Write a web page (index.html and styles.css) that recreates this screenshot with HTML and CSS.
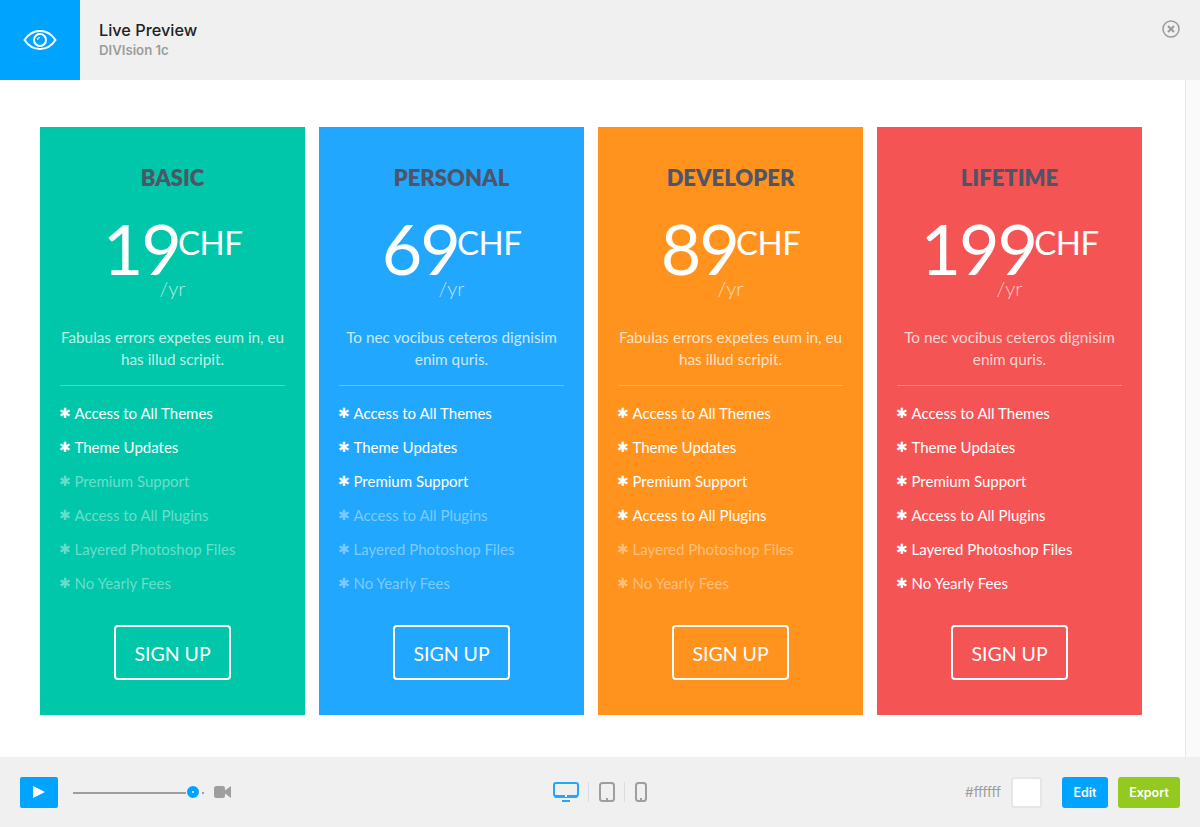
FILE: index.html
```html
<!DOCTYPE html>
<html lang="en">
<head>
<meta charset="utf-8">
<title>Live Preview</title>
<link rel="stylesheet" href="styles.css">
</head>
<body>
<header class="topbar">
  <div class="eye-tile">
    <svg class="eye-icon" width="34" height="22" viewBox="0 0 34 22" fill="none" stroke="#fff">
      <path d="M1.500 11C5.500 5 11 2 17 2s11.500 3 15.500 9C28.500 17 23 20 17 20S5.500 17 1.500 11Z" stroke-width="2"/>
      <circle cx="17" cy="11" r="6" stroke-width="2"/>
      <path d="M14.500 11a2.500 2.500 0 0 1 2.500-2.500" stroke-width="1.200"/>
    </svg>
  </div>
  <div class="titles">
    <div class="title">Live Preview</div>
    <div class="subtitle">DIVIsion 1c</div>
  </div>
  <svg class="close-icon" width="18" height="18" viewBox="0 0 18 18" fill="none" stroke="#9a9a9a">
    <circle cx="9" cy="9" r="8" stroke-width="1.500"/>
    <path d="M6 6l6 6M12 6l-6 6" stroke-width="2"/>
  </svg>
</header>

<div class="workspace">
  <main class="stage">
    <section class="card card-green">
      <h2 class="plan">BASIC</h2>
      <div class="price"><span class="amount">19</span><span class="currency">CHF</span></div>
      <div class="period">/yr</div>
      <p class="blurb">Fabulas errors expetes eum in, eu has illud scripit.</p>
      <ul class="features">
        <li><span class="star">✱</span>Access to All Themes</li>
        <li><span class="star">✱</span>Theme Updates</li>
        <li class="off"><span class="star">✱</span>Premium Support</li>
        <li class="off"><span class="star">✱</span>Access to All Plugins</li>
        <li class="off"><span class="star">✱</span>Layered Photoshop Files</li>
        <li class="off"><span class="star">✱</span>No Yearly Fees</li>
      </ul>
      <a class="signup">SIGN UP</a>
    </section>
    <section class="card card-blue">
      <h2 class="plan">PERSONAL</h2>
      <div class="price"><span class="amount">69</span><span class="currency">CHF</span></div>
      <div class="period">/yr</div>
      <p class="blurb">To nec vocibus ceteros dignisim enim quris.</p>
      <ul class="features">
        <li><span class="star">✱</span>Access to All Themes</li>
        <li><span class="star">✱</span>Theme Updates</li>
        <li><span class="star">✱</span>Premium Support</li>
        <li class="off"><span class="star">✱</span>Access to All Plugins</li>
        <li class="off"><span class="star">✱</span>Layered Photoshop Files</li>
        <li class="off"><span class="star">✱</span>No Yearly Fees</li>
      </ul>
      <a class="signup">SIGN UP</a>
    </section>
    <section class="card card-orange">
      <h2 class="plan">DEVELOPER</h2>
      <div class="price"><span class="amount">89</span><span class="currency">CHF</span></div>
      <div class="period">/yr</div>
      <p class="blurb">Fabulas errors expetes eum in, eu has illud scripit.</p>
      <ul class="features">
        <li><span class="star">✱</span>Access to All Themes</li>
        <li><span class="star">✱</span>Theme Updates</li>
        <li><span class="star">✱</span>Premium Support</li>
        <li><span class="star">✱</span>Access to All Plugins</li>
        <li class="off"><span class="star">✱</span>Layered Photoshop Files</li>
        <li class="off"><span class="star">✱</span>No Yearly Fees</li>
      </ul>
      <a class="signup">SIGN UP</a>
    </section>
    <section class="card card-red">
      <h2 class="plan">LIFETIME</h2>
      <div class="price"><span class="amount">199</span><span class="currency">CHF</span></div>
      <div class="period">/yr</div>
      <p class="blurb">To nec vocibus ceteros dignisim enim quris.</p>
      <ul class="features">
        <li><span class="star">✱</span>Access to All Themes</li>
        <li><span class="star">✱</span>Theme Updates</li>
        <li><span class="star">✱</span>Premium Support</li>
        <li><span class="star">✱</span>Access to All Plugins</li>
        <li><span class="star">✱</span>Layered Photoshop Files</li>
        <li><span class="star">✱</span>No Yearly Fees</li>
      </ul>
      <a class="signup">SIGN UP</a>
    </section>
  </main>
  <div class="scroll-strip"></div>
</div>

<footer class="toolbar">
  <div class="tool-left">
    <button class="play"><svg width="12" height="12" viewBox="0 0 12 12"><path d="M0 0L12 6L0 12Z" fill="#fff"/></svg></button>
    <div class="slider">
      <span class="track"></span>
      <span class="knob"></span>
      <span class="tail"></span>
    </div>
    <svg class="camera" width="17" height="12" viewBox="0 0 17 12"><rect x="0" y="0" width="11" height="12" rx="2.500" fill="#9e9e9e"/><path d="M11 4.500L17 0V12L11 7.500Z" fill="#9e9e9e"/></svg>
  </div>
  <div class="tool-center">
    <svg width="26" height="20" viewBox="0 0 26 20" fill="none"><rect x="1" y="1" width="24" height="13" rx="2" stroke="#22a7ff" stroke-width="2"/><path d="M1 13h24v1a2 2 0 0 1-2 2H3a2 2 0 0 1-2-2Z" fill="#22a7ff"/><rect x="12" y="13" width="2" height="2" fill="#f0f0f0"/><rect x="9" y="18" width="8" height="2" fill="#22a7ff"/></svg>
    <span class="sep"></span>
    <svg width="16" height="20" viewBox="0 0 16 20" fill="none"><rect x="1" y="1" width="14" height="18" rx="2.500" stroke="#9e9e9e" stroke-width="2"/><rect x="7" y="16" width="2" height="2" fill="#9e9e9e"/></svg>
    <span class="sep"></span>
    <svg width="12" height="20" viewBox="0 0 12 20" fill="none"><rect x="1" y="1" width="10" height="18" rx="2.500" stroke="#9e9e9e" stroke-width="2"/><rect x="5" y="16" width="2" height="2" fill="#9e9e9e"/></svg>
  </div>
  <div class="tool-right">
    <span class="hex">#ffffff</span>
    <span class="swatch"></span>
    <a class="btn btn-edit">Edit</a>
    <a class="btn btn-export">Export</a>
  </div>
</footer>
</body>
</html>
```
FILE: styles.css
```css
* { box-sizing: border-box; }
html, body { margin: 0; height: 100%; }
body {
  display: flex;
  flex-direction: column;
  height: 827px;
  overflow: hidden;
  background: #fff;
  font-family: "Lato", "Liberation Sans", sans-serif;
}

/* top bar */
.topbar {
  flex: 0 0 80px;
  display: flex;
  align-items: center;
  background: #f0f0f0;
}
.eye-tile {
  width: 80px;
  height: 80px;
  background: #00a4ff;
  display: flex;
  align-items: center;
  justify-content: center;
}
.titles {
  flex: 1;
  padding-left: 19px;
  font-family: "Inter", "Liberation Sans", sans-serif;
}
.title {
  font-size: 16.300px;
  line-height: 20px;
  font-weight: 500;
  color: #222;
}
.subtitle {
  font-size: 13.200px;
  line-height: 20px;
  font-weight: 600;
  color: #9c9c9c;
}
.close-icon {
  align-self: flex-start;
  margin: 20px 20px 0 0;
}

/* pricing */
.workspace {
  flex: 1;
  display: flex;
  min-height: 0;
}
.stage {
  flex: 1;
  display: flex;
  gap: 14px;
  padding: 47px 0 0 40px;
}
.scroll-strip {
  flex: 0 0 15px;
  background: #fafafa;
  border-left: 1px solid #e6e6e6;
}
.card {
  flex: 0 0 265px;
  height: 588px;
  padding: 36px 20px 0;
  display: flex;
  flex-direction: column;
  align-items: stretch;
  color: #fff;
  text-align: center;
}
.card-green { background: #00c7a9; }
.card-blue { background: #22a7ff; }
.card-orange { background: #ff931e; }
.card-red { background: #f55454; }

.plan {
  margin: 0;
  font-size: 22px;
  line-height: 30px;
  font-weight: 800;
  color: #4f5566;
}
.price {
  height: 60px;
  margin-top: 25px;
  display: flex;
  justify-content: center;
  align-items: flex-start;
}
.amount {
  font-size: 70px;
  line-height: 60px;
  font-weight: 400;
  letter-spacing: -2px;
}
.currency {
  font-size: 33px;
  line-height: 49px;
  font-weight: 400;
  letter-spacing: -0.500px;
  margin-left: -2px;
}
.period {
  font-size: 20px;
  line-height: 21px;
  font-weight: 300;
  color: rgba(255, 255, 255, 0.7);
}
.blurb {
  margin: 27px 0 0;
  padding-bottom: 15px;
  border-bottom: 1px solid rgba(255, 255, 255, 0.3);
  font-size: 15.300px;
  line-height: 22px;
  color: rgba(255, 255, 255, 0.75);
}
.features {
  list-style: none;
  margin: 10px 0 0;
  padding: 0;
  text-align: left;
}
.features li {
  display: flex;
  align-items: center;
  height: 34px;
  font-size: 15px;
  color: #fff;
}
.features li.off { color: rgba(255, 255, 255, 0.42); }
.star {
  flex: 0 0 14.500px;
  margin: 0 1px 0 -1px;
  font-family: "DejaVu Sans", sans-serif;
  font-size: 14px;
}
.signup {
  align-self: center;
  width: 117px;
  height: 55px;
  margin-top: 25px;
  border: 2px solid #fff;
  border-radius: 4px;
  font-size: 19.500px;
  line-height: 53px;
  font-weight: 400;
  color: #fff;
}

/* bottom bar */
.toolbar {
  flex: 0 0 70px;
  display: grid;
  grid-template-columns: 1fr auto 1fr;
  align-items: center;
  padding: 0 20px;
  background: #f0f0f0;
}
.tool-left, .tool-center, .tool-right {
  display: flex;
  align-items: center;
}
.play {
  width: 38px;
  height: 31px;
  padding: 0;
  border: 0;
  border-radius: 2px;
  background: #00a4ff;
  display: flex;
  align-items: center;
  justify-content: center;
}
.slider {
  position: relative;
  width: 130px;
  height: 12px;
  margin-left: 15px;
}
.track {
  position: absolute;
  left: 0;
  top: 6px;
  width: 113px;
  height: 2px;
  background: #9e9e9e;
}
.knob {
  position: absolute;
  left: 114px;
  top: 0;
  width: 12px;
  height: 12px;
  border-radius: 50%;
  border: 5px solid #00a4ff;
  background: #f0f0f0;
}
.tail {
  position: absolute;
  left: 129px;
  top: 6px;
  width: 2px;
  height: 2px;
  background: #9e9e9e;
}
.camera { margin-left: 11px; }
.tool-center { gap: 9px; }
.sep {
  width: 1px;
  height: 20px;
  margin-right: 1px;
  background: #dcdcdc;
}
.tool-right { justify-content: flex-end; }
.hex {
  font-family: "Inter", "Liberation Sans", sans-serif;
  font-size: 13.500px;
  color: #9c9c9c;
}
.swatch {
  width: 31px;
  height: 31px;
  margin-left: 10px;
  background: #fff;
  border: 2px solid #e6e6e6;
  border-radius: 3px;
}
.btn {
  height: 31px;
  margin-left: 10px;
  border-radius: 3px;
  font-family: "Inter", "Liberation Sans", sans-serif;
  font-size: 12.500px;
  line-height: 31px;
  font-weight: 600;
  color: #fff;
  text-align: center;
}
.btn-edit { width: 46px; margin-left: 20px; background: #00a4ff; }
.btn-export { width: 62px; background: #94c91f; }
```
